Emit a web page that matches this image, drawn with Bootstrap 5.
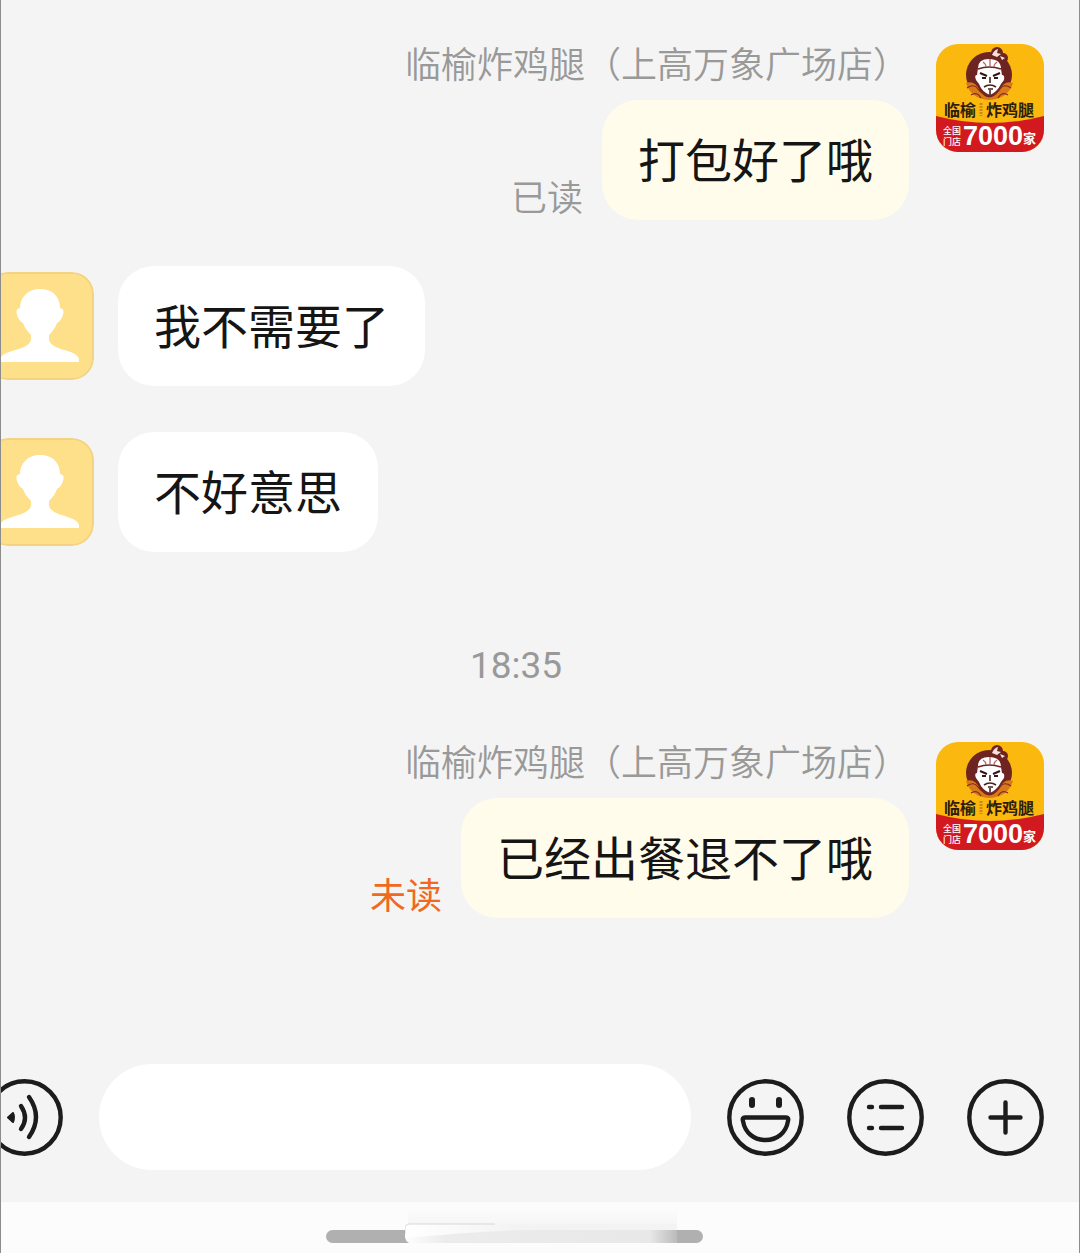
<!DOCTYPE html>
<html lang="zh-CN">
<head>
<meta charset="utf-8">
<meta name="viewport" content="width=device-width, initial-scale=1">
<title>临榆炸鸡腿</title>
<link rel="stylesheet" href="https://cdn.jsdelivr.net/npm/bootstrap@5.3.0/dist/css/bootstrap.min.css">
<style>
body{background:#f4f4f4;color:#151515;font-family:"Noto Sans CJK SC",sans-serif;overflow-x:hidden}
.chat-app{overflow-x:hidden}
.chat-app::after{content:"";position:absolute;inset:0;border:solid #8c8c8c;border-width:0 1px;pointer-events:none}
.chat-log{padding:44px 36px 0 0}
.msg-out{gap:27px;margin-bottom:46px}
.msg-in{gap:24px;margin:0 0 46px -14px}
.msg-in .face{margin-top:6px}
.face{width:108px;height:108px;flex:none;border-radius:22px}
.sender{font-size:36px;line-height:36px;color:#999;font-weight:350;margin-bottom:20px;white-space:nowrap}
.bubble{font-size:47px;line-height:60px;padding:28px 36px 32px;border-radius:36px;background:#fff}
.bubble-own{background:#fffceb}
.state{font-size:36px;line-height:40px;color:#999;font-weight:350;margin-right:19px;margin-bottom:5px}
.state-unread{color:#f0691e;font-weight:400}
.stamp{font-family:Roboto,"Noto Sans CJK SC",sans-serif;font-size:37px;line-height:40px;color:#999;padding:48px 12px 0 0;margin-bottom:56px}
.composer{padding:100px 36px 32px 0;gap:36px}
.composer .icon-btn{width:77px;height:77px;margin-right:7px}
.composer .icon-btn:last-child{margin-right:0}
.composer .icon-btn:first-child{margin-left:-14px;margin-right:0}
.icon-btn svg{width:77px;height:77px;display:block}
.composer .form-control{height:106px;border-radius:53px;font-size:47px;padding:0 36px}
.home-area{background:#fcfcfc;height:52px;padding:28px 52px 0 0}
.home-pill{width:377px;height:13px;border-radius:7px;background:#b0b0b0}
.home-haze{left:79px;top:-22px;width:272px;height:35px}
</style>
</head>
<body>
<svg class="position-absolute" width="0" height="0" aria-hidden="true">
  <symbol id="shop" viewBox="0 0 108 108">
    <rect width="108" height="108" fill="#fbb80e"/>
    <path d="M0 72Q54 86 108 72V108H0Z" fill="#d2191f"/>
    <circle cx="53" cy="31" r="23" fill="#6e2420"/>
    <path d="M30 39Q39 36 44 47Q53 60 63 47Q68 36 77 39Q72 55 53 56Q35 55 30 39Z" fill="#d9791c"/>
    <path d="M31 44q7-5 11 1q4 6 11 6t11-6q4-6 11-1M35 51q6-4 10 3M62 54q4-7 10-3" fill="none" stroke="#7b2b1e" stroke-width="1.2"/>
    <circle cx="61" cy="9" r="6" fill="#6e2420"/><circle cx="67" cy="14" r="5" fill="#6e2420"/>
    <path d="M56 11q2-5 6-6l-1 4 4 1-4 3ZM64 12l5 2-3 2Z" fill="#f8e1da"/>
    <path d="M42 24Q42 15 53 15Q65 15 65 25L66 31Q69 31 68 36L65 40Q61 48 54 51Q46 48 43 40L40 36Q38 31 41 31Z" fill="#fff"/>
    <path d="M42 25q11-4 23 0" fill="none" stroke="#6e2420" stroke-width="1.600"/>
    <path d="M54 15v7M47 18q3 2 3 5M61 18q-3 2-3 5" fill="none" stroke="#b7655f" stroke-width="1.300"/>
    <path d="M44 29l7 3M64 29l-7 3M46 34h4M58 34h4" stroke="#321817" stroke-width="2"/>
    <path d="M54 33v6M48 43q6-4 12 0M52 45h5M54 46v5" fill="none" stroke="#46211e" stroke-width="1.600"/>
    <g font-family="Noto Sans CJK SC, sans-serif" font-weight="700">
      <g fill="#2d1d0c"><text x="8" y="72" font-size="16">临榆</text><text x="50" y="72" font-size="16">炸鸡腿</text></g>
      <g fill="#fff">
        <text x="7" y="90" font-size="9" font-weight="500">全国</text>
        <text x="7" y="101" font-size="9" font-weight="500">门店</text>
        <text x="87" y="99" font-size="13">家</text>
      </g>
    </g>
    <text x="27" y="101" font-family="Liberation Sans, sans-serif" font-size="27" font-weight="700" fill="#fff">7000</text>
    <path d="M45 59v13" stroke="#c98a15" stroke-width="3" stroke-dasharray="2 1"/>
  </symbol>
  <symbol id="guest" viewBox="0 0 108 108">
    <rect x="1" y="1" width="106" height="106" rx="21" fill="#ffe08a" stroke="#f3d382" stroke-width="2"/>
    <path d="M54 17C67 17 74 25 74 36Q79 37 77 43Q75 49 71 51Q69 57 63 63V67C64 79 91 77 93 87V90H14V87C17 77 44 79 45 67V63Q39 57 37 51Q33 49 31 43Q29 37 34 36C34 25 42 17 54 17Z" fill="#fff"/>
  </symbol>
</svg>
<div class="chat-app position-relative">
  <main class="chat-log">
    <div class="msg-out d-flex justify-content-end align-items-start">
      <div class="d-flex flex-column align-items-end">
        <div class="sender">临榆炸鸡腿（上高万象广场店）</div>
        <div class="d-flex align-items-end">
          <span class="state">已读</span>
          <div class="bubble bubble-own">打包好了哦</div>
        </div>
      </div>
      <svg class="face" role="img" aria-label="店铺头像"><use href="#shop"/></svg>
    </div>
    <div class="msg-in d-flex align-items-start">
      <svg class="face" role="img" aria-label="顾客头像"><use href="#guest"/></svg>
      <div class="bubble">我不需要了</div>
    </div>
    <div class="msg-in d-flex align-items-start">
      <svg class="face" role="img" aria-label="顾客头像"><use href="#guest"/></svg>
      <div class="bubble">不好意思</div>
    </div>
    <div class="stamp text-center">18:35</div>
    <div class="msg-out d-flex justify-content-end align-items-start">
      <div class="d-flex flex-column align-items-end">
        <div class="sender">临榆炸鸡腿（上高万象广场店）</div>
        <div class="d-flex align-items-end">
          <span class="state state-unread">未读</span>
          <div class="bubble bubble-own">已经出餐退不了哦</div>
        </div>
      </div>
      <svg class="face" role="img" aria-label="店铺头像"><use href="#shop"/></svg>
    </div>
  </main>
  <form class="composer d-flex align-items-center">
    <button type="button" class="icon-btn btn p-0 border-0 flex-shrink-0" aria-label="语音">
      <svg viewBox="0 0 77 77" fill="none" stroke="#1c1c1c" stroke-width="4.4" stroke-linecap="round"><circle cx="38.5" cy="38.5" r="36.2"/><path d="M35 27q8 12 0 23M43 18q14 20 0 40"/><path d="M22 38.500l5-4.500q2 4.500 0 9Z" fill="#1c1c1c" stroke-width="2" stroke-linejoin="round"/></svg>
    </button>
    <input type="text" class="form-control border-0 shadow-none" aria-label="输入消息">
    <button type="button" class="icon-btn btn p-0 border-0 flex-shrink-0" aria-label="表情">
      <svg viewBox="0 0 77 77" fill="none" stroke="#1c1c1c" stroke-width="4.4" stroke-linecap="round" stroke-linejoin="round"><circle cx="38.5" cy="38.5" r="36.2"/><path d="M25 21v5M52 21v5" stroke-width="6"/><path d="M18 38.500H59Q62 38.500 61 42C59 54 50 61 38.500 61S18 54 16 42Q15 38.500 18 38.500Z"/></svg>
    </button>
    <button type="button" class="icon-btn btn p-0 border-0 flex-shrink-0" aria-label="快捷回复">
      <svg viewBox="0 0 77 77" fill="none" stroke="#1c1c1c" stroke-width="4.4" stroke-linecap="round"><circle cx="38.5" cy="38.5" r="36.2"/><path d="M22 28h3M34 28h21M22 49h3M34 49h21"/></svg>
    </button>
    <button type="button" class="icon-btn btn p-0 border-0 flex-shrink-0" aria-label="更多">
      <svg viewBox="0 0 77 77" fill="none" stroke="#1c1c1c" stroke-width="4.4" stroke-linecap="round"><circle cx="38.5" cy="38.5" r="36.2"/><path d="M23.500 38.500h30M38.500 23.500v30"/></svg>
    </button>
  </form>
  <div class="home-area">
    <div class="home-pill position-relative mx-auto">
      <svg class="home-haze position-absolute" viewBox="0 0 272 35" aria-hidden="true">
        <defs>
          <linearGradient id="hazeTop" x2="0" y2="1"><stop stop-color="#fcfcfc"/><stop offset="1" stop-color="#f6f6f6"/></linearGradient>
          <linearGradient id="hazeBar"><stop stop-color="#fdfdfd"/><stop offset=".15" stop-color="#ececec"/><stop offset=".9" stop-color="#e8e8e8"/><stop offset="1" stop-color="#bbb"/></linearGradient>
          <linearGradient id="hazeLip"><stop stop-color="#fff"/><stop offset=".4" stop-color="#f3f3f3"/></linearGradient>
        </defs>
        <path d="M3 0H272V16H3Z" fill="url(#hazeTop)"/>
        <path d="M0 22H272V35H4Q0 33 0 28Z" fill="url(#hazeBar)"/>
        <path d="M0 28V20Q0 16 5 16H272V22H120Q60 24 0 30Z" fill="url(#hazeLip)"/>
        <path d="M0 26V20Q0 16 5 16H90" fill="none" stroke="#d8d8d8"/>
      </svg>
    </div>
  </div>
</div>
<script src="https://cdn.jsdelivr.net/npm/bootstrap@5.3.0/dist/js/bootstrap.bundle.min.js"></script>
</body>
</html>
